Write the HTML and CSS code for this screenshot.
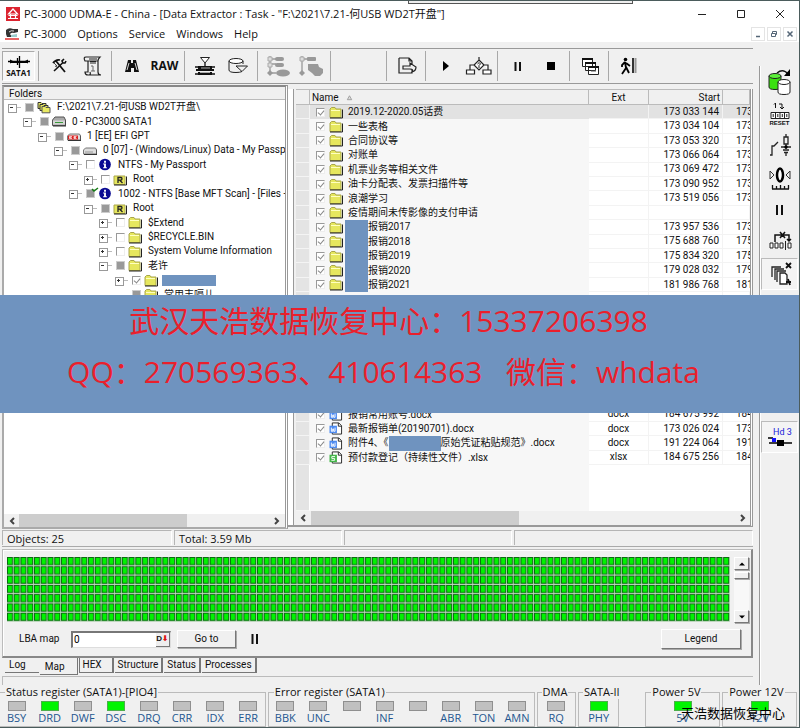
FILE: index.html
```html
<!DOCTYPE html>
<html lang="zh-CN">
<head>
<meta charset="utf-8">
<title>PC-3000 UDMA-E</title>
<link rel="stylesheet" href="styles.css">
</head>
<body>
<svg class="defs" aria-hidden="true">
  <symbol id="folder" viewBox="0 0 14 12"><path d="M1 2.500 2.500 1h3.500L7 2.500h5v8.500H1z" fill="#e6e75e" stroke="#a9a64c"/><path d="M2 4h9" stroke="#ffffc0"/><path d="M1 11.500h12.500V3" fill="none" stroke="#222"/></symbol>
  <symbol id="folder-r" viewBox="0 0 14 12"><path d="M1 2.500h11V11H1z" fill="#e6e75e" stroke="#a9a64c"/><path d="M1 11.500h12.500V3" fill="none" stroke="#222"/><path d="M5 9.500V4h3q1 0 1 1.300T8 6.700H5M7 7l2.500 2.500" fill="none" stroke="#222" stroke-width="1.300"/></symbol>
  <symbol id="folders" viewBox="0 0 14 12"><path d="M1 1h3l1 1h4v5H1z" fill="#e6e75e" stroke="#333"/><path d="M3 3h3l1 1h4v5H3z" fill="#e6e75e" stroke="#333"/><path d="M5 5h3l1 1h4v5.300H5z" fill="#e9ea62" stroke="#555"/></symbol>
  <symbol id="drive" viewBox="0 0 14 12"><path d="M3 1.500h9l1.500 3V10h-13V4.500z" fill="#aaa" stroke="#555"/><path d="M1 5h12v4H1z" fill="#d5d5d5"/><path d="M3 7h8" stroke="#3a9a3a"/><path d="M1 10.500h13V5" fill="none" stroke="#333"/></symbol>
  <symbol id="partition" viewBox="0 0 14 12"><path d="M2.500 3.500h10l1 2v4h-13v-4z" fill="#ddd" stroke="#777"/><path d="M2 7.500h8" stroke="#999"/><path d="M1 10h13V5" fill="none" stroke="#333"/></symbol>
  <symbol id="partition-ee" viewBox="0 0 14 12"><path d="M2.500 3.500h10l1 2v4h-13v-4z" fill="#ddd" stroke="#777"/><path d="M1 5h10v4H1z" fill="#d22"/><path d="M5 6H2.500v2H5M2.500 7h2M9.500 6H7v2h2.500M7 7h2" stroke="#fff" stroke-width=".7" fill="none"/><path d="M1 10h13V5" fill="none" stroke="#333"/></symbol>
  <symbol id="info" viewBox="0 0 14 14"><circle cx="7" cy="7" r="6.300" fill="#0a0a92"/><path d="M6 3h2v2H6zM5 6h3v4h1v1H5v-1h1V7H5z" fill="#fff"/></symbol>
  <symbol id="word" viewBox="0 0 14 14"><path d="M3 1h7l3 3v9H3z" fill="#fff" stroke="#222"/><path d="M9.500 1v3.500H13" fill="none" stroke="#222"/><path d="M0 4h8v8H0z" fill="#4c8af0"/><path d="M2 6v4h1.500V7.500h1V10H6V6" fill="none" stroke="#fff"/></symbol>
  <symbol id="sheet" viewBox="0 0 14 14"><path d="M3 1h7l3 3v9H3z" fill="#fff" stroke="#222"/><path d="M9.500 1v3.500H13" fill="none" stroke="#222"/><path d="M0 4h8v8H0z" fill="#43b649"/><path d="M6 6H2.500v2h3v2H2" fill="none" stroke="#fff"/></symbol>
</svg>

<div class="app">
  <div class="behind"></div>
  <header class="titlebar">
    <svg class="logo" viewBox="0 0 14 14"><path d="M0 0h14v14H0z" fill="#dc2430"/><path d="M7 2 2.500 7h9zM2.500 8.500h9M2 11.500h10M4.500 7v5M9.500 7v5" fill="none" stroke="#fff" stroke-width="1.200"/></svg>
    <h1>PC-3000 UDMA-E - China - [Data Extractor : Task - "F:\2021\7.21-何USB WD2T开盘"]</h1>
    <div class="winbtns">
      <button aria-label="Minimize"><svg viewBox="0 0 10 10"><path d="M1 5.500h8" stroke="#222"/></svg></button>
      <button aria-label="Maximize"><svg viewBox="0 0 10 10"><path d="M1.500 1.500h7v7h-7z" fill="none" stroke="#222"/></svg></button>
      <button aria-label="Close"><svg viewBox="0 0 10 10"><path d="m1 1 8 8M9 1 1 9" stroke="#222"/></svg></button>
    </div>
  </header>
  <nav class="menubar">
    <svg class="logo" viewBox="0 0 14 14"><path d="M1 3q3-3 7-1h5v3l-4 1q-2-1-4 1l2 3H2L1 7z" fill="#333"/><path d="M4 5q2-2 5-1" stroke="#ddd" fill="none"/><path d="M6 8l6-1v3H6z" fill="#9cc"/><path d="M0 12h14" stroke="#e03030" stroke-width="1.500"/></svg>
    <button>PC-3000</button><button>Options</button><button>Service</button><button>Windows</button><button>Help</button>
    <div class="mdi">
      <button aria-label="Minimize document"><svg viewBox="0 0 8 8"><path d="M2 6.500h4" stroke="#567" stroke-width="1.500"/></svg></button>
      <button aria-label="Restore document"><svg viewBox="0 0 8 8"><path d="M2.500 3V1.500h4v3H5M1.500 3.500h4v3h-4z" fill="none" stroke="#567"/></svg></button>
      <button aria-label="Close document"><svg viewBox="0 0 8 8"><path d="m1.500 1.500 5 5m0-5-5 5" stroke="#567" stroke-width="1.500"/></svg></button>
    </div>
  </nav>

  <div class="body">
    <div class="work">
      <div class="toolbar">
        <div class="group">
          <button class="sata"><svg viewBox="0 0 24 12"><path d="M1 5.500h22M12.500 0v12M10.500 2v7" stroke="#000" stroke-width="1.300"/><path d="M3 3.500 7 5.500 3 7.500M21 3.500l-4 2 4 2" fill="#000"/><path d="M4 6.500h16" stroke="#000"/></svg>SATA1</button>
        </div>
        <div class="group">
          <button aria-label="Tools"><svg viewBox="0 0 24 24"><path d="M6 9q3-4 7-3M9 7l9 11" fill="none" stroke="#111" stroke-width="1.800"/><path d="M17 5l-2 2 1 2 2 0 1-2M15.500 9 7 17" fill="none" stroke="#111" stroke-width="1.600"/><path d="M7 9l3 3M8 12l2 1" stroke="#444"/></svg></button>
          <button aria-label="Script"><svg viewBox="0 0 24 24"><path d="M6 3h14q-2 2-2 4v11q0 3 3 3H8q-3 0-3-3h3V7H5q-2-4 1-4M7 7h11M9 21q2 0 1-3" fill="none" stroke="#222" stroke-width="1.200"/><path d="M9 5h8M10 7.500h6M10 9h6" stroke="#222"/><path d="M11 12h2v5m-2 0h4" fill="none" stroke="#666"/></svg></button>
        </div>
        <div class="group">
          <button aria-label="Find"><svg viewBox="0 0 24 24"><path d="M8 6h3v3h2V6h3l3 12h-5v-4h-3v4H5z" fill="#111"/><path d="m9 9-2 7M15 9l2 7" stroke="#ddd"/></svg></button>
          <button class="raw">RAW</button>
        </div>
        <div class="group">
          <button aria-label="Load map"><svg viewBox="0 0 24 24"><path d="M7.500 3.500h9L12 9z" fill="#fff" stroke="#222"/><path d="M12 9v4M2 13h20M2 20h20" stroke="#111" stroke-width="1.300"/><path d="M5 12h14v3H5zM3 15h18v2H3zM5 18h14v3H5z" fill="#111"/><path d="M8 14h9M7 18.500h10" stroke="#eee" stroke-width=".7"/></svg></button>
          <button aria-label="Save disk"><svg viewBox="0 0 24 24"><ellipse cx="10" cy="7" rx="7" ry="2.500" fill="#fff" stroke="#222"/><path d="M3 7v9q0 2.500 7 2.500 4 0 6-1M17 7v3M10 12h11.500L16 17.500z" fill="none" stroke="#222"/></svg></button>
        </div>
        <div class="group">
          <button aria-label="Mark items" disabled><svg viewBox="0 0 24 24"><path d="M4 2v18M4 5h6M4 10h6M4 19h6" stroke="#999" stroke-width="1.300"/><path d="M2 3h4v4H2zM2 9h4v4H2z" fill="#ddd" stroke="#aaa"/><rect x="9" y="3" width="9" height="4" rx="2" fill="#999"/><rect x="9" y="9" width="9" height="4" rx="2" fill="#999"/><ellipse cx="17" cy="19" rx="7" ry="3.500" fill="#999"/><path d="m4 16 3 3-3 3-3-3z" fill="#999"/></svg></button>
          <button aria-label="Mark groups" disabled><svg viewBox="0 0 24 24"><path d="M3 2v18M3 5h6" stroke="#999" stroke-width="1.300"/><path d="M1 3h4v4H1z" fill="#ddd" stroke="#aaa"/><rect x="8" y="3" width="9" height="4" rx="1" fill="#999"/><path d="M9 10h10l1 3 4 2v4l-3 3h-5l-3-3-4-3z" fill="#999"/><path d="m3 16 3 3-3 3-3-3z" fill="#999"/></svg></button>
        </div>
        <div class="group blank"></div>
        <div class="group">
          <button aria-label="Export"><svg viewBox="0 0 24 24"><path d="M4 4h10l3 3v3M17 16v3H4V4M14 4v3h3M8 12h7V9l6 4q0 4-4 5 2-3-2-3H8z" fill="none" stroke="#222" stroke-width="1.200"/></svg></button>
        </div>
        <div class="group">
          <button aria-label="Start"><svg viewBox="0 0 24 24"><path d="m9 7 6 5-6 5z" fill="#000"/></svg></button>
          <button aria-label="Flow"><svg class="wide" viewBox="0 0 28 24"><path d="M14 3v3M14 6l5 5-5 5-5-5zM9 11H5v5M19 11h4v5M1.500 16h8v4h-8zM18 16h8v4h-8z" fill="#fff" stroke="#222" stroke-width="1.200"/><path d="M12.500 10q2-3 3 0l-1.500 1.500V14" stroke="#222" fill="none"/></svg></button>
        </div>
        <div class="group">
          <button aria-label="Pause"><svg viewBox="0 0 24 24"><path d="M9.500 8v9M14 8v9" stroke="#111" stroke-width="2"/></svg></button>
          <button aria-label="Stop"><svg viewBox="0 0 24 24"><path d="M8 8h8v8H8z" fill="#000"/></svg></button>
        </div>
        <div class="group">
          <button aria-label="Windows"><svg viewBox="0 0 24 24"><path d="M4.500 4.500h10v8h-10zM7.500 8.500h10v8h-10zM10.500 12.500h10v8h-10z" fill="#fff" stroke="#222"/><path d="M4 5h11M7 9h11M10 13h11" stroke="#111" stroke-width="2"/><path d="M13 17h5" stroke="#555"/></svg></button>
        </div>
        <div class="group last">
          <button aria-label="Exit"><svg viewBox="0 0 24 24"><circle cx="8.500" cy="5.500" r="1.800" fill="#000"/><path d="m8 8-3 3v2M8 8l1 6-4 6M9 13l3 6M9 9l4 3" fill="none" stroke="#000" stroke-width="1.800"/><path d="M16 4v15" stroke="#333" stroke-width="2"/><path d="M18.500 4v15" stroke="#999" stroke-width="2"/></svg></button>
        </div>
      </div>

      <main class="panes">
        <section class="pane tree-pane">
          <h2>Folders</h2>
          <ul class="tree">
            <li class="l0"><i class="exp"></i><input type="checkbox" class="part" aria-label="Task"><svg><use href="#folders"/></svg><span>F:\2021\7.21-何USB WD2T开盘\</span></li>
            <li class="l1"><i class="exp"></i><input type="checkbox" class="part" aria-label="Drive"><svg><use href="#drive"/></svg><span>0 - PC3000 SATA1</span></li>
            <li class="l2"><i class="exp"></i><input type="checkbox" class="part" aria-label="EFI"><svg><use href="#partition-ee"/></svg><span>1 [EE] EFI GPT</span></li>
            <li class="l3"><i class="exp"></i><input type="checkbox" class="part" aria-label="Data"><svg><use href="#partition"/></svg><span>0 [07] - (Windows/Linux) Data - My Passport</span></li>
            <li class="l4"><i class="exp"></i><input type="checkbox" aria-label="NTFS"><svg><use href="#info"/></svg><span>NTFS - My Passport</span></li>
            <li class="l5"><i class="exp plus"></i><input type="checkbox" aria-label="Root"><svg><use href="#folder-r"/></svg><span>Root</span></li>
            <li class="l4"><i class="exp"></i><input type="checkbox" class="part" aria-label="Base MFT"><svg><use href="#info"/></svg><svg class="tick" viewBox="0 0 8 6"><path d="m1 2 2 2 4-3" fill="none" stroke="#137a13" stroke-width="1.500"/></svg><span>1002 - NTFS [Base MFT Scan] - [Files - 18</span></li>
            <li class="l5"><i class="exp"></i><input type="checkbox" class="part" aria-label="Root 1002"><svg><use href="#folder-r"/></svg><span>Root</span></li>
            <li class="l6"><i class="exp plus"></i><input type="checkbox" aria-label="Extend"><svg><use href="#folder"/></svg><span>$Extend</span></li>
            <li class="l6"><i class="exp plus"></i><input type="checkbox" aria-label="Recycle"><svg><use href="#folder"/></svg><span>$RECYCLE.BIN</span></li>
            <li class="l6"><i class="exp plus"></i><input type="checkbox" aria-label="System"><svg><use href="#folder"/></svg><span>System Volume Information</span></li>
            <li class="l6"><i class="exp"></i><input type="checkbox" class="part" aria-label="老许"><svg><use href="#folder"/></svg><span>老许</span></li>
            <li class="l7"><i class="exp plus"></i><input type="checkbox" checked aria-label="Folder"><svg><use href="#folder"/></svg><b class="mask"></b></li>
            <li class="l7"><i class="exp none"></i><input type="checkbox" class="part" aria-label="常用"><svg><use href="#folder"/></svg><span>常用丰嗝儿</span></li>
          </ul>
          <div class="hscroll"><button aria-label="Left"><svg viewBox="0 0 8 8"><path d="M6 1 3 4l3 3" /></svg></button><div class="track"><div class="thumb"></div></div><button aria-label="Right"><svg viewBox="0 0 8 8"><path d="m2 1 3 3-3 3"/></svg></button></div>
        </section>

        <section class="pane list-pane">
          <table class="files">
            <thead><tr><th></th><th class="name">Name <svg viewBox="0 0 8 8"><path d="M4 2 1.500 6.500h5z" fill="#ddd" stroke="#999"/></svg></th><th class="ext">Ext</th><th class="num">Start</th><th></th></tr></thead>
            <tbody>
              <tr class="sel"><td></td><td class="name"><input type="checkbox" checked aria-label="1"><svg><use href="#folder"/></svg>2019.12-2020.05话费</td><td></td><td class="num">173 033 144</td><td class="cut">173</td></tr>
              <tr><td></td><td class="name"><input type="checkbox" checked aria-label="2"><svg><use href="#folder"/></svg>一些表格</td><td></td><td class="num">173 034 104</td><td class="cut">173</td></tr>
              <tr><td></td><td class="name"><input type="checkbox" checked aria-label="3"><svg><use href="#folder"/></svg>合同协议等</td><td></td><td class="num">173 053 320</td><td class="cut">173</td></tr>
              <tr><td></td><td class="name"><input type="checkbox" checked aria-label="4"><svg><use href="#folder"/></svg>对账单</td><td></td><td class="num">173 066 064</td><td class="cut">173</td></tr>
              <tr><td></td><td class="name"><input type="checkbox" checked aria-label="5"><svg><use href="#folder"/></svg>机票业务等相关文件</td><td></td><td class="num">173 069 472</td><td class="cut">173</td></tr>
              <tr><td></td><td class="name"><input type="checkbox" checked aria-label="6"><svg><use href="#folder"/></svg>油卡分配表、发票扫描件等</td><td></td><td class="num">173 090 952</td><td class="cut">173</td></tr>
              <tr><td></td><td class="name"><input type="checkbox" checked aria-label="7"><svg><use href="#folder"/></svg>浪潮学习</td><td></td><td class="num">173 519 056</td><td class="cut">173</td></tr>
              <tr><td></td><td class="name"><input type="checkbox" checked aria-label="8"><svg><use href="#folder"/></svg>疫情期间未传影像的支付申请</td><td></td><td></td><td></td></tr>
              <tr><td></td><td class="name"><input type="checkbox" checked aria-label="9"><svg><use href="#folder"/></svg><b class="mask"></b>报销2017</td><td></td><td class="num">173 957 536</td><td class="cut">173</td></tr>
              <tr><td></td><td class="name"><input type="checkbox" checked aria-label="10"><svg><use href="#folder"/></svg><b class="mask"></b>报销2018</td><td></td><td class="num">175 688 760</td><td class="cut">175</td></tr>
              <tr><td></td><td class="name"><input type="checkbox" checked aria-label="11"><svg><use href="#folder"/></svg><b class="mask"></b>报销2019</td><td></td><td class="num">175 834 320</td><td class="cut">175</td></tr>
              <tr><td></td><td class="name"><input type="checkbox" checked aria-label="12"><svg><use href="#folder"/></svg><b class="mask"></b>报销2020</td><td></td><td class="num">179 028 032</td><td class="cut">179</td></tr>
              <tr><td></td><td class="name"><input type="checkbox" checked aria-label="13"><svg><use href="#folder"/></svg><b class="mask"></b>报销2021</td><td></td><td class="num">181 986 768</td><td class="cut">181</td></tr>
              <tr class="covered"><td></td><td class="name"></td><td></td><td></td><td></td></tr>
              <tr><td></td><td class="name"><input type="checkbox" checked aria-label="22"><svg><use href="#word"/></svg>报销常用账号.docx</td><td class="ext">docx</td><td class="num">184 675 992</td><td class="cut">184</td></tr>
              <tr><td></td><td class="name"><input type="checkbox" checked aria-label="23"><svg><use href="#word"/></svg>最新报销单(20190701).docx</td><td class="ext">docx</td><td class="num">173 026 024</td><td class="cut">173</td></tr>
              <tr><td></td><td class="name"><input type="checkbox" checked aria-label="24"><svg><use href="#word"/></svg>附件4、《<b class="mask long"></b>原始凭证粘贴规范》.docx</td><td class="ext">docx</td><td class="num">191 224 064</td><td class="cut">191</td></tr>
              <tr><td></td><td class="name"><input type="checkbox" checked aria-label="25"><svg><use href="#sheet"/></svg>预付款登记（持续性文件）.xlsx</td><td class="ext">xlsx</td><td class="num">184 675 256</td><td class="cut">184</td></tr>
            </tbody>
            <tfoot><tr><td></td><td class="name"></td><td></td><td></td><td></td></tr></tfoot>
          </table>
          <div class="hscroll"><button aria-label="Left"><svg viewBox="0 0 8 8"><path d="M6 1 3 4l3 3" /></svg></button><div class="track"><div class="thumb"></div></div><button aria-label="Right"><svg viewBox="0 0 8 8"><path d="m2 1 3 3-3 3"/></svg></button></div>
        </section>
      </main>

      <div class="statusbar"><span>Objects: 25</span><span>Total: 3.59 Mb</span><span></span><span></span></div>

      <section class="map-panel">
        <div class="map">
          <svg class="blocks" viewBox="0 0 724 65" preserveAspectRatio="none"><defs><pattern id="blk" width="6.766" height="9.290" patternUnits="userSpaceOnUse"><path d="M0 0h6.766v9.290H0z" fill="#c9dcc9"/><path d="M.5.5h5v7.200h-5z" fill="#00f400" stroke="#0a6a10"/></pattern></defs><path d="M0 0h724v65H0z" fill="url(#blk)"/></svg>
          <div class="vscroll"><button aria-label="Up"><svg viewBox="0 0 8 8"><path d="M1 5.500h6L4 2.500z"/></svg></button><div class="vthumb"></div><button aria-label="Down"><svg viewBox="0 0 8 8"><path d="M1 2.500h6L4 5.500z"/></svg></button></div>
        </div>
        <div class="controls">
          <label for="lba">LBA map</label>
          <div class="field"><input id="lba" type="text" value="0"><button class="dd">D<em>⬇</em></button></div>
          <button class="raised">Go to</button>
          <button class="pause" aria-label="Pause map"><svg viewBox="0 0 8 10"><path d="M1.500 0v10M6 0v10" stroke="#111" stroke-width="2"/></svg></button>
          <button class="raised legend">Legend</button>
        </div>
      </section>
      <div class="tabs"><button>Log</button><button class="on">Map</button><button>HEX</button><button>Structure</button><button>Status</button><button>Processes</button></div>
      <div class="strip"></div>
    </div>

    <aside class="side">
      <button aria-label="Copy disk"><svg viewBox="0 0 28 28"><path d="M11 5q6-5 11 1" fill="none" stroke="#111" stroke-width="1.500"/><path d="M24 1v7h-6z" fill="#000"/><path d="M3 8v11q0 2.500 6 2.500t6-2.500V8" fill="#3be011" stroke="#222"/><ellipse cx="9" cy="8" rx="6" ry="2.500" fill="#5cf03a" stroke="#222"/><path d="M12 14v10q0 2.500 6 2.500t6-2.500V14" fill="#fff" stroke="#222"/><ellipse cx="18" cy="14" rx="6" ry="2.500" fill="#fff" stroke="#222"/></svg></button>
      <button aria-label="Reset" class="reset"><svg viewBox="0 0 28 18"><path d="m8 2.500 1.500-1.500v5M13 2h3v5m-2-2 2 2 2-2" fill="none" stroke="#111"/><path d="M5 10.500h18v6H5zM9.500 10v7M14 10v7M18.500 10v7M7.200 12v3M11.800 12v3M16.300 12v3M20.800 12v3" fill="#fff" stroke="#222"/></svg>RESET</button>
      <button aria-label="Power"><svg viewBox="0 0 28 28"><path d="M4 23h2V14h2l4-4M15 15h10M20 2v3m0 7v5M17 18h6M18 20.500h4M20 20v4M18 5h4v7h-4z" fill="none" stroke="#222" stroke-width="1.300"/><circle cx="20" cy="15" r="1.700"/></svg></button>
      <button aria-label="Zero"><svg viewBox="0 0 28 28"><ellipse cx="14" cy="11" rx="3" ry="6.500" fill="#fff" stroke="#000" stroke-width="2.500"/><path d="m4 7 4 4-4 4zM24 7l-4 4 4 4z" fill="none" stroke="#333"/><path d="M6 25h17M6.500 25v-4M10.500 25v-3M14.500 25v-4M18.500 25v-3M22.500 25v-4" stroke="#111" stroke-width="1.300"/></svg></button>
      <button aria-label="Hold"><svg viewBox="0 0 28 28"><path d="M11 9v10M16 9v10" stroke="#111" stroke-width="2"/></svg></button>
      <button aria-label="Skip"><svg viewBox="0 0 28 28"><path d="M9 14V7h14v6m-2-2 2 2 2-2M14 4l5 6m0-6-5 6" fill="none" stroke="#111" stroke-width="1.500"/><path d="M4 15h3v5H4zM9 15h3v5H9zM14 15h3v5h-3zM19.500 13v9M22 15h3v5h-3z" fill="#fff" stroke="#222"/></svg></button>
      <button aria-label="Copy pages" class="sunk"><svg viewBox="0 0 28 28"><path d="M6 17V7h9M9 20V9h9M11 22V11h9" fill="none" stroke="#222" stroke-width="1.300"/><path d="M14 13h5l2 2v9h-7z" fill="#fff" stroke="#222" stroke-width="1.300"/><path d="m20 3 5 5m0-5-5 5M20 22h5m-3-3 2 6" stroke="#111" stroke-width="1.800"/></svg></button>
      <button class="sunk hd">Hd 3<svg viewBox="0 0 24 10"><path d="M0 1h5M1 6h23" stroke="#000" stroke-width="1.500"/><path d="M4 1h4v4H4z" fill="#11f"/><path d="M9 3h7v6H9z"/></svg></button>
    </aside>
  </div>

  <footer class="registers">
    <fieldset class="g8"><legend>Status register (SATA1)-[PIO4]</legend><div><i></i>BSY</div><div><i class="on"></i>DRD</div><div><i></i>DWF</div><div><i class="on"></i>DSC</div><div><i></i>DRQ</div><div><i></i>CRR</div><div><i></i>IDX</div><div><i></i>ERR</div></fieldset>
    <fieldset class="g8"><legend>Error register (SATA1)</legend><div><i></i>BBK</div><div><i></i>UNC</div><div><i></i></div><div><i></i>INF</div><div><i></i></div><div><i></i>ABR</div><div><i></i>TON</div><div><i></i>AMN</div></fieldset>
    <fieldset class="g1"><legend>DMA</legend><div><i></i>RQ</div></fieldset>
    <fieldset class="g1"><legend>SATA-II</legend><div><i class="on"></i>PHY</div></fieldset>
    <fieldset class="pw first"><legend>Power 5V</legend><div><i class="on"></i>5V</div></fieldset>
    <fieldset class="pw"><legend>Power 12V</legend><div><i class="on"></i>12V</div></fieldset>
  </footer>

  <div class="banner"><p>武汉天浩数据恢复中心：15337206398</p><p>QQ：270569363、410614363&nbsp;&nbsp; 微信：whdata</p></div>
  <div class="credit">天浩数据恢复中心</div>
</div>
</body>
</html>
```
FILE: styles.css
```css
* { box-sizing: border-box; }
body { margin: 0; background: #f0f0f0; color: #111; font: 11px/14px "Open Sans", "Noto Sans CJK SC", sans-serif; }
button { font: inherit; color: inherit; background: none; border: 0; padding: 0; margin: 0; display: flex; align-items: center; justify-content: center; }
h1, h2, p, ul { margin: 0; padding: 0; font: inherit; }
.defs { position: absolute; width: 0; height: 0; }

.app { position: relative; height: 100vh; min-height: 728px; display: flex; flex-direction: column; overflow: hidden; border-top: 1px solid #4b5c5c; border-right: 1px solid #4b5c5c; border-bottom: 1px solid #4b5c5c; }
.behind { position: absolute; top: -1px; left: 408px; width: 225px; height: 4px; background: #eee; border: 1px solid #555; border-top: 0; }

.titlebar { display: flex; align-items: center; height: 25px; background: #fff; padding-left: 6px; gap: 4px; }
.titlebar h1 { flex: 1; white-space: nowrap; }
.logo { width: 14px; height: 14px; flex: none; }
.winbtns { display: flex; }
.winbtns button { width: 39px; height: 25px; }
.winbtns svg { width: 10px; height: 10px; }
.menubar { display: flex; align-items: center; height: 16px; background: #fff; padding: 0 2px 0 5px; gap: 11px; }
.menubar .logo { margin-right: -6px; }
.mdi { margin-left: auto; display: flex; gap: 2px; }
.mdi button { width: 14px; height: 14px; border: 1px solid #e4e4e4; }
.mdi svg { width: 8px; height: 8px; }

.body { flex: 1; display: flex; min-height: 0; }
.work { flex: 1; min-width: 0; display: flex; flex-direction: column; padding: 6px 6px 0 2px; }

.toolbar { display: flex; height: 36px; border-top: 1px solid #999; border-bottom: 1px solid #999; padding: 2px 0; background: #f0f0f0; }
.group { display: flex; padding: 0 3px; border-right: 1px solid #a8a8a8; }
.group:first-child { padding: 0 3px 0 0; }
.group.last { border: 0; }
.blank { width: 56px; }
.blank ~ .group { padding: 0 2px 0 3px; }
.toolbar button { width: 33px; height: 30px; }
.toolbar svg { width: 24px; height: 24px; }
.toolbar svg.wide { width: 28px; }
.toolbar .sata { flex-direction: column; font: bold 8px/9px "Open Sans", sans-serif; border: 1px solid #aaa; border-right-color: #fff; border-bottom-color: #fff; background: #f6f6f6; }
.toolbar .sata svg { height: 12px; }
.toolbar .raw { font: bold 12px/14px "Open Sans", sans-serif; }

.panes { flex: 1; display: flex; min-height: 0; font: 10px/14px Roboto, "Noto Sans CJK SC", sans-serif; }
.pane { display: flex; flex-direction: column; min-width: 0; }
.tree-pane { flex: 287 1 0; border: 2px solid #aaa; border-top-color: #888; border-right: 3px double #999; background: #fff; margin: 1px 0; }
.tree-pane h2 { height: 13px; line-height: 13px; padding-left: 5px; background: #f0f0f0; border-bottom: 1px solid #bbb; }
.tree { list-style: none; height: 202px; display: grid; grid-template-rows: repeat(14, 1fr); }
.tree li { position: relative; display: flex; align-items: center; white-space: nowrap; overflow: hidden; padding-left: 4px; }
.tree li svg { width: 14px; height: 13px; flex: none; margin: 0 6px 0 3px; }
.tree .l1 { padding-left: 19px; }
.tree .l2 { padding-left: 34px; }
.tree .l3 { padding-left: 50px; }
.tree .l4 { padding-left: 65px; }
.tree .l5 { padding-left: 80px; }
.tree .l6 { padding-left: 95px; }
.tree .l7 { padding-left: 111px; }
.tree li .tick { position: absolute; left: 87px; top: 0; width: 8px; height: 6px; margin: 0; }
.tree .mask { width: 54px; height: 11px; margin-left: -2px; }
.exp { width: 17px; height: 7px; flex: none; background: linear-gradient(#333, #333) 2px 3px / 3px 1px no-repeat, linear-gradient(#bbb, #bbb) 8px 3px / 5px 1px no-repeat; position: relative; }
.exp::before { content: ""; position: absolute; left: 0; top: 0; width: 7px; height: 7px; border: 1px solid #999; }
.exp.plus { background: linear-gradient(#333, #333) 2px 3px / 3px 1px no-repeat, linear-gradient(#333, #333) 3px 2px / 1px 3px no-repeat, linear-gradient(#bbb, #bbb) 8px 3px / 5px 1px no-repeat; }
.exp.none { visibility: hidden; }

input[type=checkbox] { appearance: none; flex: none; margin: 0; width: 9px; height: 9px; background: #fff; border: 1px solid #999; border-right-color: #eee; border-bottom-color: #eee; position: relative; }
input.part { background: #999; border-color: #ccc; }
input:checked::after { content: ""; position: absolute; left: 2px; top: 0; width: 3px; height: 5px; border: solid #888; border-width: 0 1px 1px 0; transform: rotate(40deg); }
.mask { background: #6f93bf; flex: none; }

.hscroll { margin-top: auto; display: flex; height: 13px; background: #f0f0f0; }
.hscroll button { width: 15px; }
.hscroll svg { width: 8px; height: 8px; fill: none; stroke: #444; stroke-width: 2; }
.track { flex: 1; display: flex; }
.thumb { width: 67%; background: #cdcdcd; }

.list-pane { flex: 464 1 0; border: solid #999; border-width: 0 3px 2px 0; border-right-style: double; margin: 5px 0 3px; padding-left: 8px; background: linear-gradient(90deg, #fff 5px, #999 5px, #999 6px, #f0f0f0 6px); }
.files { flex: 1; display: flex; flex-direction: column; min-height: 0; background: #fff; }
.files tr { display: grid; grid-template-columns: 14px minmax(0, 1fr) 60px 74px 27px; min-height: 0; }
.files th { font-weight: normal; padding: 0; height: 16px; line-height: 15px; background: #f0f0f0; border-right: 1px solid #bbb; border-top: 1px solid #bbb; border-bottom: 1px solid #bbb; }
.files th.name { text-align: left; padding-left: 2px; }
.files th svg { width: 7px; height: 7px; margin-left: 5px; }
.files tbody { display: grid; height: 360px; grid-template-rows: repeat(13, 1fr) 8fr repeat(4, 1fr); }
.files td { padding: 0; display: flex; align-items: center; white-space: nowrap; overflow: hidden; border-right: 1px solid #f3f3f3; border-bottom: 1px solid #f3f3f3; min-height: 0; }
.files td:first-child { background: #e4e4e4; border-bottom-color: #f4f4f4; }
.files td.name { background: #f7f7f7; padding-left: 6px; border: 0; }
.files td svg { width: 14px; height: 13px; flex: none; margin: 0 5px 0 4px; }
.files .ext { justify-content: center; text-align: center; }
.files .num { justify-content: flex-end; text-align: right; padding-right: 3px; }
.files th.num { padding-right: 2px; }
.files .cut { padding-left: 13px; border-right: 0; }
.files .sel td, .files .sel td.name { background: #e2e2e2; }
.files .mask { width: 23px; align-self: stretch; margin-left: -3px; }
.files td:has(.mask) { overflow: visible; }
.files .mask.long { width: 52px; margin: 0; }
.files tfoot { flex: 1; display: grid; }
.files tfoot td { border-color: #fff; }
.list-pane .thumb { width: 49%; }
.list-pane .hscroll { height: 14px; }

.statusbar { display: grid; grid-template-columns: 170fr 168fr 168fr 239fr; gap: 2px; height: 17px; border-bottom: 1px solid #aaa; }
.statusbar span { border: 1px solid #b5b5b5; border-right-color: #fff; border-bottom: 0; padding-left: 4px; line-height: 15px; height: 15px; }

.map-panel { margin-top: 2px; border: 1px solid #bbb; border-right: 2px solid #888; border-bottom: 2px solid #888; box-shadow: inset 1px 1px #fff; padding: 7px 2px 6px 4px; }
.map { display: flex; gap: 4px; height: 66px; }
.blocks { flex: 1; min-width: 0; height: 65px; }
.vscroll { width: 15px; display: flex; flex-direction: column; background: #f8f8f8; }
.vscroll button, .vthumb, .raised { border: 1px solid #fff; border-right-color: #777; border-bottom-color: #777; background: #f0f0f0; box-shadow: 1px 1px #aaa; }
.vscroll button { height: 13px; }
.vscroll button:last-child { margin-top: auto; }
.vscroll svg { width: 8px; height: 8px; }
.vthumb { height: 7px; margin-top: 2px; }
.controls { display: flex; align-items: center; height: 22px; margin-top: 5px; padding: 0 8px 0 12px; font: 10px/14px Roboto, sans-serif; }
.controls label { width: 52px; }
.field { display: flex; width: 100px; height: 17px; background: #fff; border: 2px solid #777; border-right: 1px solid #ddd; border-bottom: 1px solid #ddd; }
.field input { flex: 1; min-width: 0; border: 0; padding: 0 1px; background: none; font: inherit; outline: 0; }
.dd { width: 14px; background: #eee; font: bold 8px/10px "Liberation Sans", "DejaVu Sans", sans-serif; border-right: 1px solid #777; border-bottom: 1px solid #777; }
.dd em { color: #e01010; font-style: normal; }
.raised { width: 59px; height: 18px; margin-left: 6px; }
.pause { margin-left: 15px; }
.pause svg { width: 8px; height: 10px; }
.legend { width: 80px; height: 20px; margin-left: auto; }

.tabs { display: flex; gap: 1px; padding-left: 3px; height: 18px; font: 10px/14px Roboto, sans-serif; }
.tabs button { height: 15px; padding: 0 3px; border: solid #777; border-width: 0 2px 1px 0; }
.tabs button:first-child { padding: 0 13px 0 4px; border-right: 0; }
.tabs .on { height: 17px; padding: 2px 12px 0 5px; border-right-width: 1px; }
.tabs button:nth-child(3) { padding-right: 10px; border-left-width: 1px; }
.strip { height: 9px; border-top: 1px solid #bbb; border-left: 1px solid #bbb; }

.side { width: 40px; margin: 24px 0 0; border-left: 1px solid #999; box-shadow: inset 1px 0 #fff; padding-left: 1px; }
.side button { width: 37px; height: 32px; }
.side svg { width: 28px; height: 28px; }
.side .reset { flex-direction: column; font: bold 6px/6px "Liberation Sans", sans-serif; }
.side .reset svg { height: 18px; }
.side .sunk { border: 1px solid #bbb; border-right-color: #fff; border-bottom-color: #fff; background: #f4f4f4; }
.side .hd { margin-top: 131px; flex-direction: column; color: #2020d8; font: 9px/10px Roboto, sans-serif; padding-left: 6px; align-items: center; }
.side .hd svg { width: 24px; height: 10px; margin-left: -6px; }

.registers { display: flex; gap: 2px; height: 42px; padding: 0 2px 0 0; color: #24568f; }
.registers fieldset { min-width: 0; margin: 0; padding: 2px 0 0; display: flex; border: 1px solid #bbb; height: 42px; }
.registers legend { color: #111; padding: 0 1px; margin-left: 5px; white-space: nowrap; height: 14px; }
.registers .g8 { flex: 269 1 0; }
.registers .g8:first-child { border-left: 0; }
.registers .g1 { flex: 38 1 0; }
.registers .g1 legend { margin-left: 4px; }
.registers .g1 + .g1 { flex-grow: 40; }
.registers .pw { flex: 74 1 0; }
.registers .first { margin-left: 24px; }
.registers div { flex: 1; display: flex; flex-direction: column; align-items: center; line-height: 14px; }
.registers i { width: 18px; height: 10px; background: #c0c0c0; border: 1px solid #8f8f8f; flex: none; }
.registers i.on { background: #00f400; border-color: #4cae4c; }

.banner { position: absolute; left: 0; right: 0; top: 294px; height: 118px; background: #6f93bf; color: #ea1f2c; text-align: center; padding: 0; font: 400 30px/51px "Open Sans", "Noto Sans CJK SC", sans-serif; white-space: nowrap; }
.banner p { padding-right: 22px; }
.banner p + p { padding-right: 32px; }
.credit { position: absolute; right: 14px; bottom: 5px; font: 13px/18px "Noto Sans CJK SC", sans-serif; color: #000; }
```
